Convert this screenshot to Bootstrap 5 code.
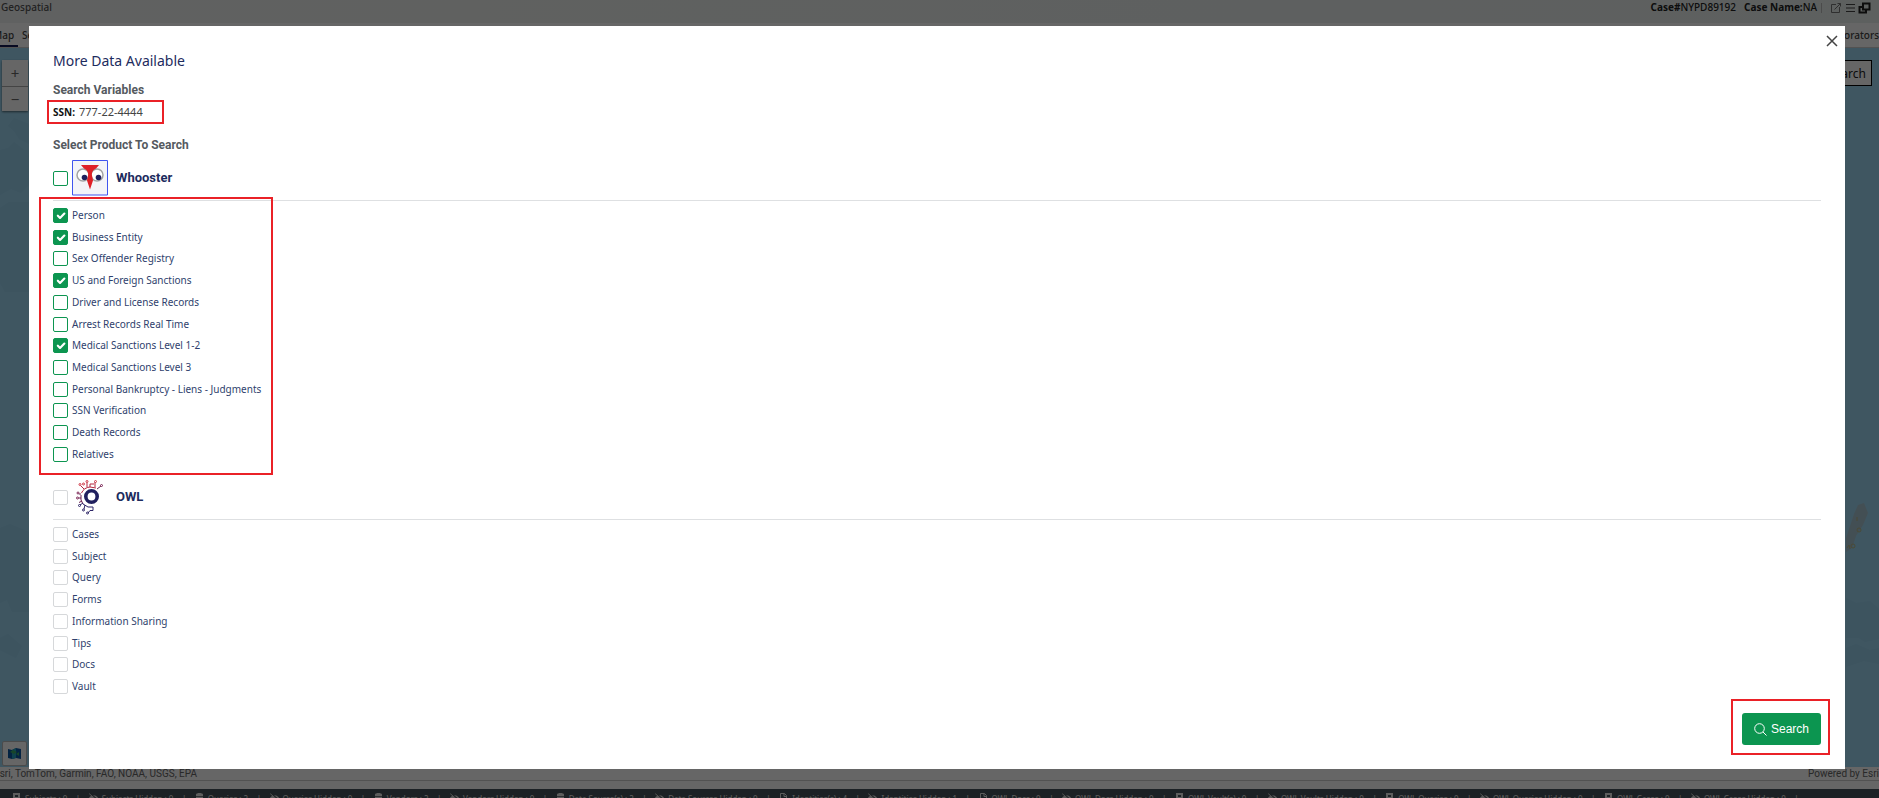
<!DOCTYPE html>
<html lang="en">
<head>
<meta charset="utf-8">
<meta name="viewport" content="width=device-width, initial-scale=1">
<title>Geospatial</title>
<link href="https://cdn.jsdelivr.net/npm/bootstrap@5.3.0/dist/css/bootstrap.min.css" rel="stylesheet">
<style>
  :root { --navy: #1d2c5e; --green: #0c9550; --mark-red: #ea2127; }
  body { font-family: "Noto Sans", "Open Sans", sans-serif; font-size: 10px; line-height: 15px; color: #555; background: #fff; }
  .app { height: 100vh; overflow: hidden; }
  .app-head { height: 23px; padding: 0 8px 8px 1px; background: linear-gradient(90deg, #f1f3f2, #e9f0ee); }
  .case-no { color: #222; font-weight: 500; }
  .head-sep { width: 1px; height: 10px; background: #bbb; }
  .tab-row { height: 25px; border-bottom: 1px solid #ccc; }
  .tab-row a { color: #444; font-weight: 500; line-height: 24px; }
  .tab-row .cut-left { margin-left: -7px; padding-right: 4px; border-bottom: 2px solid #131b56; }
  .map-area { background: #9ed7f3; }
  .zoom-box { margin: 12px 0 0 2px; width: 26px; box-shadow: 0 1px 2px #0008; }
  .zoom-box button { height: 26px; border: 0; background: #fff; color: #666; padding: 0; font-size: 15px; line-height: 26px; }
  .zoom-box button + button { border-top: 1px solid #aaa; height: 25px; line-height: 24px; }
  .map-search { margin: 12px 7px 0 0; height: 26px; border: 1px solid #000; background: #fff; color: #222; font-size: 12px; padding: 0 5px; }
  .base-btn { margin: 0 0 1px 2px; width: 25px; height: 25px; border: 1px solid #bbb; border-radius: 2px; background: #fff; padding: 0; }
  .credit { font-family: Roboto, sans-serif; height: 14px; line-height: 14px; color: #666; border-bottom: 1px solid #ccc; }
  .credit-text { margin-left: -6px; }
  .status-gap { height: 8px; }
  .status-bar { height: 9px; background: #48545c; color: #e8e8e8; padding: 4px 80px 0 12px; font-size: 8px; line-height: 11px; overflow: hidden; white-space: nowrap; }
  .status-bar svg { width: 9px; height: 9px; margin-right: 4px; flex: none; }
  .dimmer { background: rgba(0,0,0,.6); overflow: hidden; }
  .data-dialog { max-width: none; margin: 26px 34px 29px 29px; height: calc(100% - 55px); }
  .data-panel { height: 100%; border: 0; border-radius: 0; padding: 24px; }
  .close-x { position: absolute; top: 8px; right: 6px; border: 0; background: none; padding: 0; width: 14px; height: 14px; display: flex; }
  .title-text { font-size: 14px; line-height: 22px; color: var(--navy); font-weight: 400; }
  .label-text { font-family: Roboto, sans-serif; font-size: 12px; line-height: 20px; color: #555a5f; font-weight: 700; }
  .marked { border: 2px solid var(--mark-red); }
  .ssn-box { margin-left: -6px; padding: 0 19px 0 4px; height: 24px; line-height: 20px; font-size: 11px; color: #444; }
  .ssn-box b { color: #111; margin-right: 4px; font-size: 10px; }
  .select-label { margin-top: 11px; }
  .product-head { padding: 1px 0 4px; border-bottom: 1px solid #dee0e2; }
  .product-head .logo { width: 36px; height: 36px; margin: 0 8px 0 4px; flex: none; }
  .product-head label { font-family: Roboto, sans-serif; font-size: 13px; line-height: 20px; font-weight: 700; color: var(--navy); }
  .tick-list { margin: 7px 0 0; height: 254px; }
  .tick-list-short { height: 167px; }
  .tick-list li { height: 15px; display: flex; align-items: center; }
  .tick-list label { color: #2f3f6d; margin-left: 4px; }
  .tick.form-check-input { width: 15px; height: 15px; margin: 0; flex: none; border: 1px solid var(--green); border-radius: 2px; box-shadow: none; }
  .tick.form-check-input:checked { background-color: var(--green); border-color: var(--green); background-size: 14px; }
  .tick.tick-off { border-color: #d6d8da; }
  .list-mark { position: absolute; top: -4px; bottom: -13px; left: -14px; width: 234px; pointer-events: none; }
  .go-box { margin: 0 -9px -10px 0; padding: 12px 7px 8px 9px; }
  .go-btn { font-family: "Liberation Sans", Arial, sans-serif; height: 32px; width: 79px; background: var(--green); border: 0; border-radius: 3px; color: #fff; font-size: 12px; padding: 0; }
  .go-btn:hover { background: var(--green); color: #fff; }
</style>
</head>
<body>
<svg class="d-none">
  <symbol id="i-book" viewBox="0 0 9 9"><path fill="currentColor" fill-rule="evenodd" d="M1 0h7v9H1zM3 2v2h3V2z"/></symbol>
  <symbol id="i-data" viewBox="0 0 9 9"><path fill="currentColor" d="M1 1.500C1-.5 8-.5 8 1.500v1.700H1zM1 4h7v5H1z"/></symbol>
  <symbol id="i-doc" viewBox="0 0 9 9"><path fill="none" stroke="currentColor" d="M1.500.5h4l2 2v6h-6zM5 .5v3h2.500"/></symbol>
  <symbol id="i-hide" viewBox="0 0 10 9"><path fill="currentColor" d="M0 4.500Q5-.5 10 4.500 5 9.500 0 4.500"/><path stroke="#48545a" stroke-width="2" d="M1 0l9 8"/><path stroke="currentColor" d="M.3.300l9.400 8"/></symbol>
</svg>

<div class="app d-flex flex-column">
  <header class="app-head d-flex align-items-center">
    <span class="me-auto fw-medium">Geospatial</span>
    <span class="case-no me-2"><b>Case#</b>NYPD89192</span>
    <span class="case-no"><b>Case Name:</b>NA</span>
    <span class="head-sep ms-1 me-2"></span>
    <svg width="41" height="14" viewBox="0 0 41 14" fill="none" stroke="#444"><path stroke="#777" d="M6 3.500H1.500v8h8V6M4.500 8.500l6-6M7.500 2.500h3v3"/><path d="M16 3.500h9M16 7h9M16 10.500h9"/><path stroke="#222" stroke-width="2" d="M33 2.500h6.500v6H33zM33 6h-3.500v5.500H36V9"/></svg>
  </header>
  <nav class="tab-row d-flex">
    <a class="text-decoration-none cut-left" href="#">Map</a>
    <a class="text-decoration-none ms-1" href="#">Search</a>
    <a class="text-decoration-none ms-auto" href="#">Collaborators</a>
  </nav>
  <main class="map-area flex-fill d-flex flex-column justify-content-between position-relative">
    <svg class="position-absolute w-100 h-100" aria-hidden="true">
      <g fill="#98d1ee"><path d="M8 78l6-8 15 6v20l-10-5-5-8zM0 102l8-2 6-6 10 8 5 0v35l-8 8-10-4-11 6zM0 160l9-6h20v90H5l-5-9zM0 480l10-4 19 8v80H12l-5-12-7 3zM0 590l8-4 14 12-6 12-16-8z"/>
      <path d="M1846 550l10 5 14-2 9 8v30l-14 3-6-4h-13zM1846 600l10-4 14 6 9-2v16l-15-3-18 6z"/></g>
      <path fill="#a9c6d2" d="M1846 490l4-12 4-12 4-9 6-2 4 10-5 12-7 11-4 12-6 4z"/>
      <g fill="none" stroke="#b8b888"><circle cx="1859" cy="482" r="2"/><circle cx="1853" cy="498" r="2"/><path d="M1847 500l2-3 1 4M1857 469v4"/></g>
    </svg>
    <div class="d-flex justify-content-between align-items-start position-relative">
      <div class="zoom-box d-flex flex-column"><button type="button">+</button><button type="button">−</button></div>
      <button class="map-search" type="button">Search</button>
    </div>
    <button class="base-btn position-relative d-flex align-items-center justify-content-center" type="button" aria-label="Basemaps"><svg width="13" height="12" viewBox="0 0 13 12"><path fill="#0b57a5" d="M0 1l4 1 4-2 5 1v10l-5-1-4 1-4-1z"/><path fill="#23a4c0" d="M4 2l4-2v10l-4 1z"/><path fill="#3bb06a" d="M2 4l3-2 4 2-3 2zM8 6l3-2v4z"/></svg></button>
  </main>
  <div class="credit d-flex justify-content-between"><span class="credit-text">Esri, TomTom, Garmin, FAO, NOAA, USGS, EPA</span><span>Powered by Esri</span></div>
  <div class="status-gap"></div>
  <footer class="status-bar d-flex justify-content-between" id="status"></footer>
</div>

<div class="modal d-block dimmer" role="dialog" aria-labelledby="dlgTitle">
  <div class="modal-dialog data-dialog">
    <div class="modal-content data-panel">
      <button class="close-x" type="button" aria-label="Close"><svg width="14" height="14" viewBox="0 0 14 14" stroke="#444" stroke-width="1.500"><path d="M2 2l10 10M12 2L2 12"/></svg></button>
      <h1 class="title-text mb-2" id="dlgTitle">More Data Available</h1>
      <h2 class="label-text m-0">Search Variables</h2>
      <div class="marked ssn-box align-self-start"><b>SSN:</b>777-22-4444</div>
      <h2 class="label-text select-label mb-1">Select Product To Search</h2>

      <div class="product-head d-flex align-items-center">
        <input class="form-check-input tick" type="checkbox" id="whooster">
        <svg class="logo" viewBox="0 0 36 36"><path fill="#f3f4f8" stroke="#3f55ee" d="M.5.5h35v34.500H.5z"/><g fill="#fff" stroke="#a3a3a3" stroke-width="1.500"><circle cx="11" cy="15" r="6"/><circle cx="25" cy="15" r="6"/></g><path fill="#df2027" d="M9 5h18l-3 3.500q-4 1.500-4.200 6l1.200 6-3 9-3-9 1.200-6q-.2-4.500-4.200-6z"/><circle cx="12.500" cy="17.500" r="2.800" fill="#20205e"/><circle cx="26.500" cy="17.500" r="2.800" fill="#20205e"/></svg>
        <label for="whooster">Whooster</label>
      </div>
      <div class="position-relative">
        <ul class="tick-list list-unstyled d-flex flex-column justify-content-between" id="whoosterList"></ul>
        <div class="list-mark marked" aria-hidden="true"></div>
      </div>

      <div class="product-head d-flex align-items-center mt-3">
        <input class="form-check-input tick tick-off" type="checkbox" id="owl">
        <svg class="logo" viewBox="0 0 36 36" fill="none"><circle cx="19.500" cy="17.500" r="5.700" stroke="#20205e" stroke-width="3.600"/><path stroke="#b3273f" d="M9.500 14Q12 8.500 18 8l6 1M12 10L8.500 6.500M15 8V3.500M18 8V5h4M23 8V3"/><path stroke="#6a2050" d="M25 10l4-3M9 16v5l2 4M9 15H7M9 19H6.500M10 22l-3 1.500"/><path stroke="#2c2466" d="M11 25l5 3h5v3.500h-3L16 34M13 26l-1 4M11 24l-3 2"/><g stroke="#d13a48"><circle cx="8" cy="5.500" r="1"/><circle cx="11.500" cy="5" r="1"/><circle cx="15" cy="2.500" r="1"/><circle cx="23.500" cy="2.500" r="1"/></g><g stroke="#7b2555"><circle cx="29.500" cy="6.500" r="1"/><circle cx="6" cy="14" r="1"/><circle cx="5.500" cy="19" r="1"/></g><g stroke="#2c2466"><circle cx="7.500" cy="26.500" r="1"/><circle cx="11.500" cy="31" r="1"/><circle cx="15.500" cy="34" r="1"/></g></svg>
        <label for="owl">OWL</label>
      </div>
      <ul class="tick-list tick-list-short list-unstyled d-flex flex-column justify-content-between" id="owlList"></ul>

      <div class="marked go-box mt-auto align-self-end">
        <button class="btn go-btn d-flex align-items-center justify-content-center" type="button"><svg class="me-1" width="13" height="13" viewBox="0 0 13 13" fill="none" stroke="#fff"><circle cx="5.500" cy="5.500" r="4.800"/><path d="M9 9l3.500 3.500"/></svg>Search</button>
      </div>
    </div>
  </div>
</div>

<script src="https://cdn.jsdelivr.net/npm/bootstrap@5.3.0/dist/js/bootstrap.bundle.min.js"></script>
<script>
  function fill(id, names, on, off) {
    document.getElementById(id).innerHTML = names.map((n, i) =>
      `<li><input class="form-check-input tick ${off ? 'tick-off' : ''}" type="checkbox" id="${id}${i}" ${on.includes(i) ? 'checked' : ''}><label for="${id}${i}">${n}</label></li>`).join('');
  }
  fill('whoosterList', ['Person', 'Business Entity', 'Sex Offender Registry', 'US and Foreign Sanctions', 'Driver and License Records',
    'Arrest Records Real Time', 'Medical Sanctions Level 1-2', 'Medical Sanctions Level 3', 'Personal Bankruptcy - Liens - Judgments',
    'SSN Verification', 'Death Records', 'Relatives'], [0, 1, 3, 6], false);
  fill('owlList', ['Cases', 'Subject', 'Query', 'Forms', 'Information Sharing', 'Tips', 'Docs', 'Vault'], [], true);

  const items = [['book', 'Subjects : 0'], ['hide', 'Subjects Hidden : 0'], ['data', 'Queries : 2'], ['hide', 'Queries Hidden : 0'],
    ['data', 'Vendors : 2'], ['hide', 'Vendors Hidden : 0'], ['data', 'Data Source(s) : 2'], ['hide', 'Data Sources Hidden : 0'],
    ['doc', 'Identities(s) : 4'], ['hide', 'Identities Hidden : 1'], ['doc', 'OWL Docs : 0'], ['hide', 'OWL Docs Hidden : 0'],
    ['book', 'OWL Vault(s) : 0'], ['hide', 'OWL Vaults Hidden : 0'], ['book', 'OWL Queries : 0'], ['hide', 'OWL Queries Hidden : 0'],
    ['book', 'OWL Cases : 0'], ['hide', 'OWL Cases Hidden : 0']];
  document.getElementById('status').innerHTML = items.map(([icon, text]) =>
    `<span class="d-flex"><svg><use href="#i-${icon}"/></svg>${text}</span><span>|</span>`).join('');
</script>
</body>
</html>
